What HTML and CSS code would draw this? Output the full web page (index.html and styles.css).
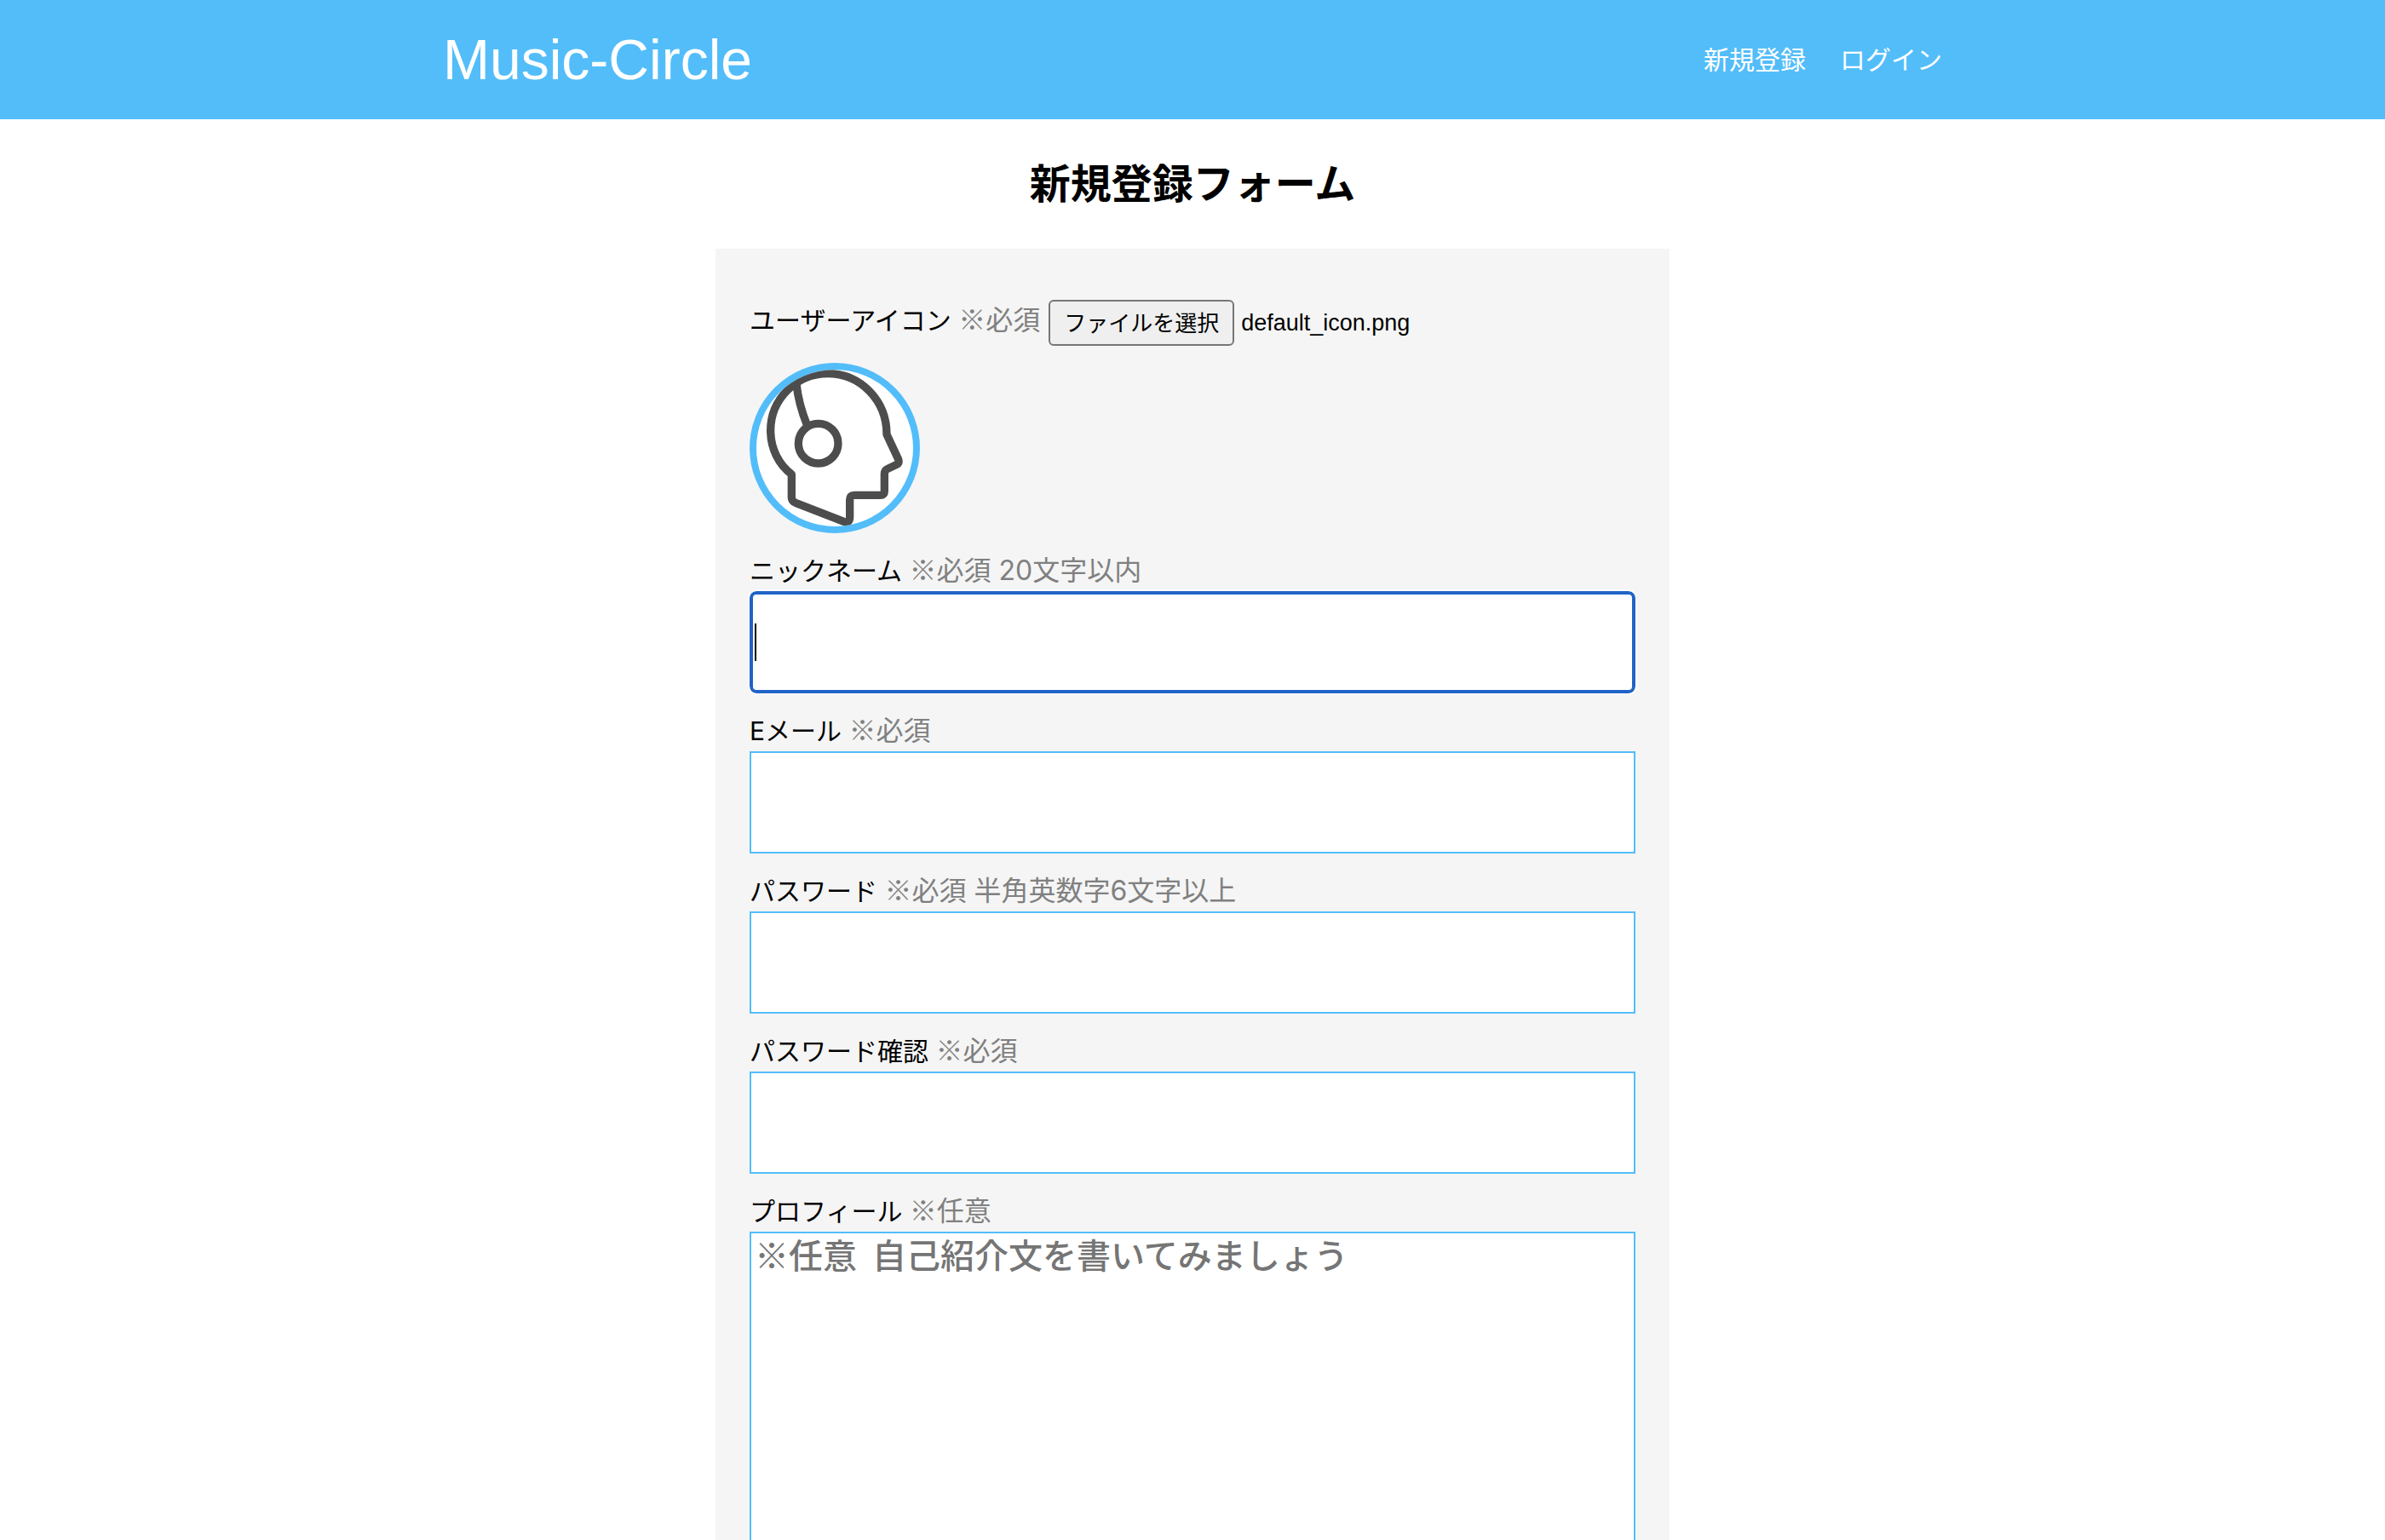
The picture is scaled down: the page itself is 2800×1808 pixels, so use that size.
FILE: index.html
```html
<!DOCTYPE html>
<html lang="ja">
<head>
  <meta charset="utf-8">
  <title>Music-Circle</title>
  <link rel="stylesheet" href="styles.css">
</head>
<body>
  <div class="page">
    <header class="header">
      <div class="header-inner">
        <a class="logo" href="#">Music-Circle</a>
        <nav class="nav">
          <a href="#">新規登録</a>
          <a href="#">ログイン</a>
        </nav>
      </div>
    </header>
    <main>
      <h1 class="title">新規登録フォーム</h1>
      <form class="card">
        <div class="file-row">
          <label class="label" for="icon">ユーザーアイコン <span class="hint"><span class="mark">※</span>必須</span></label>
          <input class="file-input" id="icon" type="file" tabindex="-1">
          <button class="file-button" id="icon-button" type="button">ファイルを選択</button>
          <span class="file-name" id="icon-name">default_icon.png</span>
        </div>
        <svg class="avatar" viewBox="84 72 552 552" role="img" aria-label="ユーザーアイコン">
          <g fill="none" stroke="#4d4d4d" stroke-width="28" stroke-linejoin="round">
            <path d="M208 440C163 407 134 350 134 286C134 178 222 86 336 86C450 86 543 180 543 300L584 388Q588 401 578 406L545 422Q535 427 535 439V500Q535 514 521 514H429Q413 514 413 530V592Q413 614 392 607L222 541Q208 535 208 522Z"/>
            <path d="M225 122Q232 190 262 266"/>
            <circle cx="302" cy="332" r="70"/>
          </g>
        </svg>
        <div class="field">
          <label class="label" for="nickname">ニックネーム <span class="hint"><span class="mark">※</span>必須 20文字以内</span></label>
          <input class="input" id="nickname" type="text" placeholder=" " autofocus>
        </div>
        <div class="field">
          <label class="label" for="email">Eメール <span class="hint"><span class="mark">※</span>必須</span></label>
          <input class="input" id="email" type="email" placeholder=" ">
        </div>
        <div class="field">
          <label class="label" for="password">パスワード <span class="hint"><span class="mark">※</span>必須 半角英数字6文字以上</span></label>
          <input class="input" id="password" type="password" placeholder=" ">
        </div>
        <div class="field">
          <label class="label" for="confirm">パスワード確認 <span class="hint"><span class="mark">※</span>必須</span></label>
          <input class="input" id="confirm" type="password" placeholder=" ">
        </div>
        <div class="field">
          <label class="label" for="profile">プロフィール <span class="hint"><span class="mark">※</span>任意</span></label>
          <textarea class="input textarea" id="profile" placeholder="※任意&nbsp; 自己紹介文を書いてみましょう"></textarea>
        </div>
      </form>
    </main>
  </div>
  <script src="main.js"></script>
</body>
</html>
```
FILE: main.js
```js
const fileInput = document.getElementById('icon');
document.getElementById('icon-button').addEventListener('click', () => fileInput.click());
fileInput.addEventListener('change', () => {
  if (fileInput.files.length) {
    document.getElementById('icon-name').textContent = fileInput.files[0].name;
  }
});
document.getElementById('nickname').focus();
```
FILE: styles.css
```css
* {
  box-sizing: border-box;
}

body {
  margin: 0;
  color: #000;
  background: #fff;
  font-family: Inter, "Noto Sans CJK JP", sans-serif;
  font-size: 30px;
  line-height: 48px;
}

.page {
  height: 100vh;
  overflow-y: auto;
  scrollbar-width: none;
}

.header {
  background: #53bdfa;
}

.header-inner {
  display: flex;
  align-items: center;
  justify-content: space-between;
  max-width: 1760px;
  min-height: 140px;
  margin: 0 auto;
}

.header a {
  color: #fff;
  text-decoration: none;
}

.logo {
  font-family: "Liberation Sans", sans-serif;
  font-size: 66px;
  line-height: 80px;
}

.nav {
  display: flex;
  gap: 40px;
}

.title {
  margin: 40px 0;
  font-size: 48px;
  font-weight: 700;
  line-height: 72px;
  text-align: center;
}

.card {
  width: 40%;
  margin: 0 auto;
  padding: 60px 40px;
  background: #f5f5f5;
}

.file-row {
  display: flex;
  align-items: flex-start;
  margin-bottom: 20px;
}

.file-input {
  position: absolute;
  width: 1px;
  height: 1px;
  opacity: 0;
  pointer-events: none;
}

.file-button {
  height: 54px;
  margin: 0 8px 0 10px;
  padding: 0 16px 4px;
  border: 2px solid #767676;
  border-radius: 6px;
  background: #efefef;
  color: #000;
  font-family: "Liberation Sans", "Noto Sans CJK JP", sans-serif;
  font-size: 26px;
}

.file-name {
  font-family: "Liberation Sans", sans-serif;
  font-size: 27px;
  line-height: 54px;
}

.avatar {
  display: block;
  width: 200px;
  height: 200px;
  margin-bottom: 20px;
  border: 8px solid #53bdfa;
  border-radius: 50%;
  background: #fff;
}

.field {
  margin-bottom: 20px;
}

.label {
  display: block;
}

.hint {
  color: #808080;
  font-size: 32px;
}

.mark {
  font-family: "Noto Sans CJK JP", sans-serif;
  line-height: 1;
}

.input {
  display: block;
  width: 100%;
  height: 120px;
  padding: 2px 4px;
  border: 2px solid #53bdfa;
  border-radius: 0;
  background: #fff;
  color: #000;
  font-family: inherit;
  font-size: 40px;
}

.input:focus {
  padding: 0 2px;
  border: 4px solid #2163c6;
  border-radius: 8px;
  outline: 2px solid #fff;
}

/* Steady caret while a focused field is still empty */
.input:not(.textarea):focus:placeholder-shown {
  background: linear-gradient(#000, #000) 2px center / 2px 44px no-repeat #fff;
  caret-color: transparent;
}

.textarea {
  height: 600px;
  padding-top: 0;
  font-family: "Noto Sans CJK JP", sans-serif;
  font-weight: 500;
  line-height: 48px;
  resize: none;
}

.textarea::placeholder {
  color: #757575;
}
```
